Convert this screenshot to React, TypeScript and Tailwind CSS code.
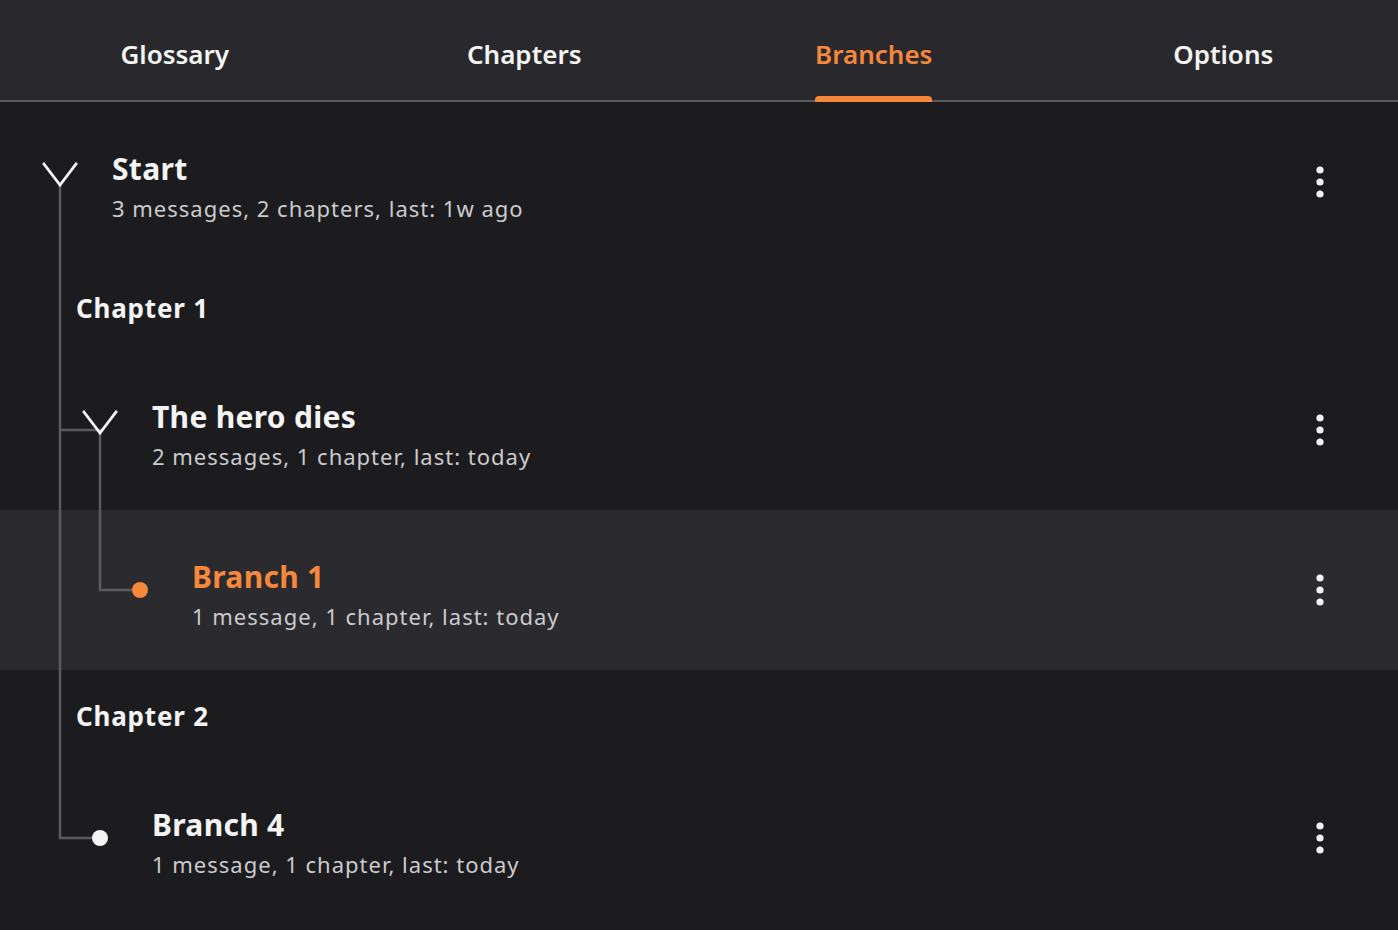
import * as React from "react"

type Row =
  | { kind: "chapter"; label: string }
  | {
      kind: "branch"
      title: string
      meta: string
      depth: 0 | 1 | 2
      marker: "chevron" | "dot" | "dot-active"
      active?: boolean
    }

const tabs = ["Glossary", "Chapters", "Branches", "Options"]

const rows: Row[] = [
  { kind: "branch", title: "Start", meta: "3 messages, 2 chapters, last: 1w ago", depth: 0, marker: "chevron" },
  { kind: "chapter", label: "Chapter 1" },
  { kind: "branch", title: "The hero dies", meta: "2 messages, 1 chapter, last: today", depth: 1, marker: "chevron" },
  { kind: "branch", title: "Branch 1", meta: "1 message, 1 chapter, last: today", depth: 2, marker: "dot-active", active: true },
  { kind: "chapter", label: "Chapter 2" },
  { kind: "branch", title: "Branch 4", meta: "1 message, 1 chapter, last: today", depth: 1, marker: "dot" },
]

const depthPad = ["pl-[40px]", "pl-[80px]", "pl-[120px]"]

function Chevron() {
  return (
    <svg width="36" height="26" viewBox="0 0 36 26" fill="none" className="mb-[16px]">
      <path d="M2 3 L18 24 L34 3" stroke="#f4f4f4" strokeWidth="2.8" strokeLinecap="square" />
    </svg>
  )
}

function Kebab() {
  return (
    <button className="flex size-10 items-center justify-center">
      <svg width="10" height="34" viewBox="0 0 10 34" fill="#f2f2f2">
        <circle cx="5" cy="5" r="3.6" />
        <circle cx="5" cy="17" r="3.6" />
        <circle cx="5" cy="29" r="3.6" />
      </svg>
    </button>
  )
}

function BranchRow({ row }: { row: Extract<Row, { kind: "branch" }> }) {
  return (
    <div
      className={`flex h-[160px] items-center pr-[58px] ${depthPad[row.depth]} ${
        row.active ? "bg-[#2a2a2f]" : ""
      }`}
    >
      <div className="relative z-10 flex w-10 justify-center">
        {row.marker === "chevron" ? (
          <Chevron />
        ) : (
          <span
            className={`size-4 rounded-full ${row.marker === "dot-active" ? "bg-[#f5883b]" : "bg-[#f4f4f4]"}`}
          />
        )}
      </div>
      <div className="ml-8 flex flex-1 flex-col pt-[12px]">
        <span
          className={`text-[30px] font-bold leading-[40px] tracking-[0.3px] ${
            row.active ? "text-[#f5883b]" : "text-[#f4f4f4]"
          }`}
        >
          {row.title}
        </span>
        <span className="text-[22px] leading-[38px] tracking-[1px] text-[#cbcbcd]">{row.meta}</span>
      </div>
      <Kebab />
    </div>
  )
}

export default function App() {
  return (
    <div className="h-[930px] w-[1398px] overflow-hidden bg-[#1c1c1f] font-['Noto_Sans','Open_Sans',sans-serif]">
      <nav className="grid h-[102px] grid-cols-4 border-b-2 border-[#5b5b5f] bg-[#29292d]">
        {tabs.map((t) => {
          const active = t === "Branches"
          return (
            <div key={t} className="flex justify-center">
              <span
                className={`relative flex h-full items-center pt-[8px] text-[26px] font-semibold ${
                  active ? "text-[#f5883b]" : "text-[#f4f4f4]"
                }`}
              >
                {t}
                {active && (
                  <span className="absolute -bottom-[2px] left-0 right-0 h-[6px] rounded-t-[4px] bg-[#f5883b]" />
                )}
              </span>
            </div>
          )
        })}
      </nav>

      <div className="relative">
        {rows.map((r, i) =>
          r.kind === "chapter" ? (
            <div key={i} className="flex h-[88px] items-center pl-[76px] pt-[4px]">
              <span className="text-[26px] font-bold tracking-[0.8px] text-[#f4f4f4]">{r.label}</span>
            </div>
          ) : (
            <BranchRow key={i} row={r} />
          ),
        )}
        {/* tree connectors, drawn over row backgrounds */}
        <svg className="pointer-events-none absolute left-0 top-0" width="200" height="760" fill="none">
          <path d="M60 83 V736 H100" stroke="#5b5b5f" strokeWidth="2.5" />
          <path d="M60 328 H100 V488 H140" stroke="#5b5b5f" strokeWidth="2.5" />
        </svg>
      </div>
    </div>
  )
}
